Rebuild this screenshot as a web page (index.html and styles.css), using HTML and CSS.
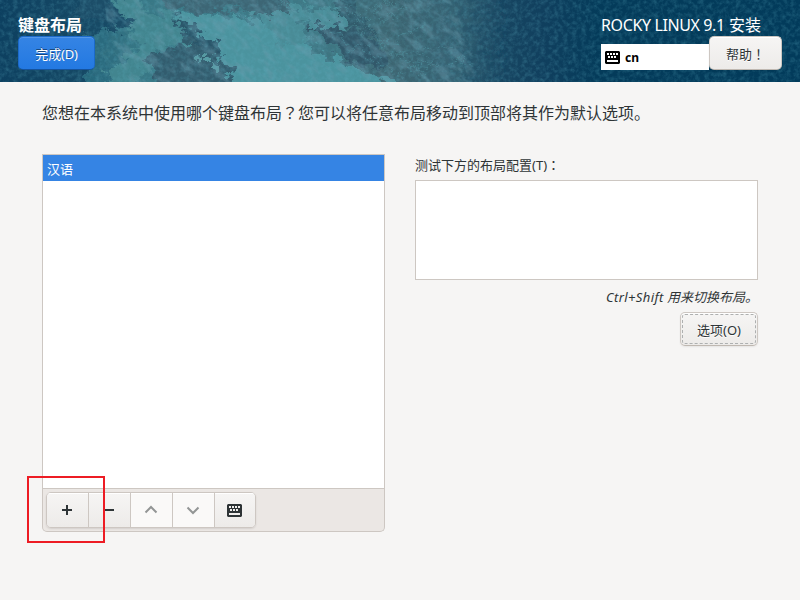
FILE: index.html
```html
<!DOCTYPE html>
<html lang="zh-CN">
<head>
<meta charset="utf-8">
<title>键盘布局</title>
<link rel="stylesheet" href="styles.css">
</head>
<body>
<svg class="defs" width="0" height="0" aria-hidden="true">
  <symbol id="keyboard" viewBox="0 0 15 13">
    <path fill="currentColor" fill-rule="evenodd" d="M1 0h13l1 1v11l-1 1H1l-1-1V1zM2 2v2h2V2zm3 0v2h2V2zm3 0v2h2V2zm3 0v2h2V2zM3 5v2h2V5zm3 0v2h2V5zm3 0v2h2V5zM2 9v2h11V9z"/>
  </symbol>
</svg>
<header class="header">
  <svg class="texture" width="800" height="82" viewBox="0 0 800 82" aria-hidden="true">
    <defs>
      <linearGradient id="sea" x1="0" x2="1" y1="0" y2="0">
        <stop offset="0" stop-color="#0d4060"/>
        <stop offset=".12" stop-color="#174a66"/>
        <stop offset=".6" stop-color="#1b4963"/>
        <stop offset=".68" stop-color="#103f5e"/>
        <stop offset=".75" stop-color="#043b5a"/>
        <stop offset="1" stop-color="#023b5b"/>
      </linearGradient>
      <linearGradient id="land" gradientUnits="userSpaceOnUse" x1="80" x2="508" y1="0" y2="0">
        <stop offset="0" stop-color="#25647a"/>
        <stop offset=".15" stop-color="#397886"/>
        <stop offset=".55" stop-color="#3f7986"/>
        <stop offset=".72" stop-color="#3c6571"/>
        <stop offset=".87" stop-color="#366474"/>
        <stop offset="1" stop-color="#214f69" stop-opacity="0"/>
      </linearGradient>
      <filter id="rough" x="-10%" y="-20%" width="120%" height="140%">
        <feTurbulence type="fractalNoise" baseFrequency=".09 .12" numOctaves="5" seed="8" result="n"/>
        <feDisplacementMap in="SourceGraphic" in2="n" scale="26" xChannelSelector="R" yChannelSelector="G"/>
        <feGaussianBlur stdDeviation=".7"/>
      </filter>
      <filter id="mottle" x="0" y="0" width="100%" height="100%">
        <feTurbulence type="fractalNoise" baseFrequency=".05 .13" numOctaves="5" seed="21"/>
        <feColorMatrix values="0 0 0 0 .15  0 0 0 0 .33  0 0 0 0 .42  4 0 0 0 -1.9" result="m"/>
        <feComposite in="m" in2="SourceGraphic" operator="in"/>
      </filter>
      <filter id="grain" x="0" y="0" width="100%" height="100%">
        <feTurbulence type="fractalNoise" baseFrequency=".22" numOctaves="3" seed="4"/>
        <feColorMatrix values="0 0 0 0 .12  0 0 0 0 .45  0 0 0 0 .56  1.8 0 0 0 -.7"/>
      </filter>
    </defs>
    <rect width="800" height="82" fill="url(#sea)"/>
    <g filter="url(#rough)">
      <path fill="url(#land)" d="M106-10H520V95H85V35L122 28 112 18z"/>
      <path fill="#43858f" d="M112-5 140-5 137 12 172 14 190 40 155 50 135 95H100L110 70 140 45 125 20z"/>
      <path fill="#4b939e" d="M175 13 240 16 305 42 335 60 420 95H230L215 48 190 36z"/>
      <path fill="#4a8b96" d="M255 14 285 5 330 8 355 24 345 28 300 24 310 45 280 42z"/>
      <path fill="#1c4e68" d="M76-8H108L122 18 134 26 122 30 96 20 76 22z"/>
      <path fill="#325c6e" d="M146 55 178 47 190 37 208 44 218 55 233 67 228 90H158L152 75z"/>
      <path fill="#2c566b" d="M172 17 182 20 200 34 220 43 218 55 204 48 190 36 180 27z"/>
      <path fill="#33596b" d="M305 25 335 25 368 34 384 50 392 64 370 67 341 56 326 40z"/>
      <path fill="#3d6674" d="M150-8 285-8 290 12 250 14 230 8 200 14 165 8z"/>
      <path fill="#325b6c" d="M342-6 350-8 366 25 380 38 372 38 354 27 338 12z"/>
      <path fill="#5ba0a6" opacity=".9" d="M195 58 208 56 209 62 197 62zM212 62 222 61 221 66 213 66z"/>
    </g>
    <g transform="rotate(38 290 41)" filter="url(#mottle)">
      <ellipse cx="290" cy="41" rx="205" ry="150" fill="#fff" opacity=".4"/>
    </g>
    <g fill="none" stroke="#5194a0" stroke-width="1" opacity=".5" filter="url(#rough)">
      <path d="M343 0 363 26 379 39 401 58 423 75M278 3 318 25 358 49 403 76M356 22 390-3M370 29 408 6M384 43 428 25M398 58 448 44M410 66 470 60M376 12 400-8"/>
    </g>
    <rect width="800" height="82" filter="url(#grain)" opacity=".3"/>
  </svg>
  <div class="header-side">
    <h1 class="page-title">键盘布局</h1>
    <button class="btn btn-primary">完成(D)</button>
  </div>
  <div class="header-side product">
    <div class="product-name"><span class="product-latin">ROCKY LINUX 9.1</span> 安装</div>
    <div class="product-row">
      <div class="layout-indicator"><svg width="15" height="13"><use href="#keyboard"/></svg><span>cn</span></div>
      <button class="btn btn-help">帮助<span class="punct" lang="zh-TW">！</span></button>
    </div>
  </div>
</header>
<main class="content">
  <p class="intro">您想在本系统中使用哪个键盘布局<span class="punct" lang="zh-TW">？</span>您可以将任意布局移动到顶部将其作为默认选项。</p>
  <div class="columns">
    <section class="layouts">
      <div class="list"><div class="row-selected">汉语</div></div>
      <div class="toolbar">
        <div class="tools">
          <button class="tool"><svg width="16" height="16"><path class="solid" d="M7 3h2v4h4v2H9v4H7V9H3V7h4z"/></svg></button>
          <button class="tool"><svg width="16" height="16"><path class="solid" d="M3 7h10v2H3z"/></svg></button>
          <button class="tool" disabled><svg width="16" height="16"><path class="chevron" d="M2.500 10.500 8 5l5.500 5.500"/></svg></button>
          <button class="tool" disabled><svg width="16" height="16"><path class="chevron" d="M2.500 5.500 8 11l5.500-5.500"/></svg></button>
          <button class="tool"><svg class="tool-keyboard" width="15" height="13"><use href="#keyboard"/></svg></button>
        </div>
        <div class="highlight"></div>
      </div>
    </section>
    <section class="testing">
      <label class="test-label" for="test">测试下方的布局配置(T)<span class="punct" lang="zh-TW">：</span></label>
      <textarea class="test-area" id="test"></textarea>
      <div class="hint"><span class="hint-keys">Ctrl+Shift</span> 用来切换布局。</div>
      <button class="btn btn-options">选项(O)</button>
    </section>
  </div>
</main>
</body>
</html>
```

FILE: styles.css
```css
* { box-sizing: border-box; }
body {
  margin: 0;
  width: 800px;
  height: 600px;
  overflow: hidden;
  background: #f6f5f4;
  color: #2e3436;
  font: 13px/20px "Noto Sans", "Noto Sans CJK SC", sans-serif;
}
button { font: inherit; color: inherit; padding: 0; margin: 0; }
.defs { position: absolute; }
.punct { font-family: "Noto Sans CJK TC", sans-serif; line-height: 1; }
.header {
  position: relative;
  height: 82px;
  padding: 14px 18px 0;
  display: flex;
  justify-content: space-between;
  overflow: hidden;
}
.texture { position: absolute; left: 0; top: 0; }
.header-side { position: relative; color: #fff; }
.page-title { margin: 0; font-size: 16px; line-height: 22px; font-weight: 700; }
.btn {
  display: block;
  height: 34px;
  padding-top: 1px;
  border: 1px solid #cdc7c2;
  border-bottom-color: #bfb8b1;
  border-radius: 5px;
  background: linear-gradient(#f6f5f4, #edebe9);
  box-shadow: inset 0 1px #fff, 0 1px 2px rgba(0, 0, 0, .07);
  text-shadow: 0 1px #fff;
  color: #2e3436;
}
.btn-primary {
  width: 77px;
  border-color: #1b6acb;
  border-bottom-color: #15539e;
  background: linear-gradient(#3584e4, #2379e2);
  box-shadow: inset 0 1px #5397e8;
  color: #fff;
  letter-spacing: -.2px;
  text-shadow: 0 -1px rgba(0, 0, 0, .45);
}
.product { width: 181px; }
.product-name { font-size: 16px; line-height: 22px; white-space: nowrap; }
.product-latin { letter-spacing: -.38px; }
.product-row { display: flex; align-items: flex-start; }
.layout-indicator {
  width: 108px;
  height: 26px;
  margin-top: 8px;
  padding-left: 4px;
  display: flex;
  align-items: center;
  gap: 5px;
  background: #fff;
  color: #000;
  font-size: 12px;
  font-weight: 700;
}
.layout-indicator span { padding-top: 1px; }
.btn-help { width: 73px; }
.content { padding: 19px 42px 0; }
.intro { margin: 0; font-size: 16px; line-height: 24px; height: 24px; white-space: nowrap; }
.columns { margin-top: 29px; display: grid; grid-template-columns: 343px 343px; gap: 30px; }
.list { height: 335px; border: 1px solid #cdc7c2; background: #fff; }
.row-selected { height: 26px; padding-left: 4px; line-height: 28px; background: #3584e4; color: #fff; }
.toolbar {
  position: relative;
  height: 43px;
  padding: 3px;
  border: 1px solid #cdc7c2;
  border-top: 0;
  border-radius: 0 0 5px 5px;
  background: #ebe7e4;
}
.tools {
  display: flex;
  width: 210px;
  height: 36px;
  border: 1px solid #cdc7c2;
  border-radius: 5px;
  overflow: hidden;
  box-shadow: 0 1px 2px rgba(0, 0, 0, .1);
}
.tool {
  flex: 0 0 42px;
  display: flex;
  align-items: center;
  justify-content: center;
  padding-right: 1px;
  border: 0;
  border-right: 1px solid #cdc7c2;
  background: linear-gradient(#f6f5f4, #edebe9);
  box-shadow: inset 0 1px #fff;
  color: #2e3436;
}
.tool:last-child { flex-basis: 40px; padding-right: 2px; border-right: 0; }
.tool-keyboard { display: block; margin-top: 1px; }
.tool:disabled { background: #faf9f8; color: #929595; }
.solid { fill: currentColor; }
.chevron { fill: none; stroke: currentColor; stroke-width: 2; }
.highlight {
  position: absolute;
  left: -16px;
  top: -13px;
  width: 78px;
  height: 67px;
  border: 2px solid #ed1c24;
}
.testing { display: flex; flex-direction: column; }
.test-label { height: 26px; line-height: 22px; }
.test-area {
  display: block;
  height: 100px;
  padding: 0;
  border: 1px solid #cdc7c2;
  background: #fff;
  resize: none;
}
.hint { margin-top: 7px; text-align: right; font-style: italic; }
.hint-keys { letter-spacing: .38px; }
.btn-options {
  align-self: flex-end;
  width: 78px;
  margin-top: 5px;
  outline: 1px dashed #aeb0b0;
  outline-offset: -3px;
}
```
